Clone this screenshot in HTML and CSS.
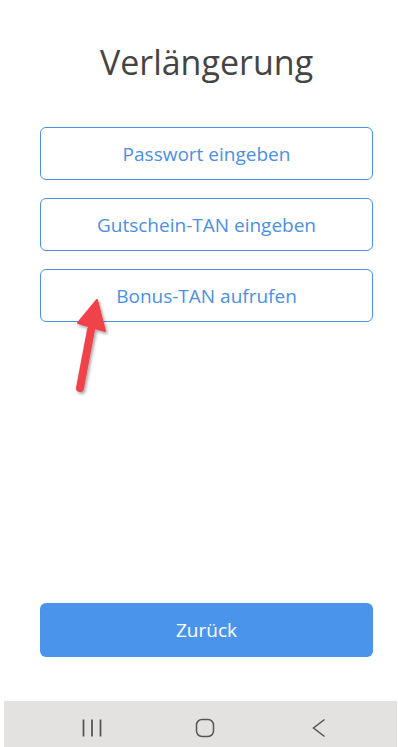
FILE: index.html
```html
<!DOCTYPE html>
<html lang="de">
<head>
<meta charset="utf-8">
<title>Verlängerung</title>
<link rel="stylesheet" href="styles.css">
</head>
<body>
<div class="screen">
  <main class="content">
    <h1 class="title">Verlängerung</h1>
    <div class="options">
      <button class="btn-outline">Passwort eingeben</button>
      <button class="btn-outline">Gutschein-TAN eingeben</button>
      <button class="btn-outline">Bonus-TAN aufrufen</button>
    </div>
    <button class="btn-primary">Zurück</button>
  </main>
  <nav class="navbar">
    <svg class="nav-icon" width="20" height="20" viewBox="0 0 20 20"><path d="M1.5 1.5v17M10 1.5v17M18.5 1.5v17" stroke="#555" stroke-width="1.8" fill="none"/></svg>
    <svg class="nav-icon" width="20" height="20" viewBox="0 0 20 20"><rect x="1.5" y="1.5" width="17" height="17" rx="5.5" stroke="#555" stroke-width="1.5" fill="none"/></svg>
    <svg class="nav-icon" width="20" height="20" viewBox="0 0 20 20"><path d="M15.5 1.5L4.5 10 15.5 18.5" stroke="#555" stroke-width="1.5" fill="none"/></svg>
  </nav>
  <svg class="arrow" width="60" height="110" viewBox="0 0 60 110">
    <defs>
      <filter id="sh" x="-50%" y="-50%" width="200%" height="200%">
        <feDropShadow dx="1.5" dy="2" stdDeviation="1.5" flood-color="#000" flood-opacity="0.35"/>
      </filter>
    </defs>
    <g filter="url(#sh)">
      <path d="M20 96 L31 38" stroke="#f0424a" stroke-width="8" stroke-linecap="round" fill="none"/>
      <path d="M37 8 L18 31 L45 39 Z" fill="#f0424a" stroke="#f0424a" stroke-width="2" stroke-linejoin="round"/>
    </g>
  </svg>
</div>
</body>
</html>
```

FILE: styles.css
```css
* { box-sizing: border-box; }
html, body { margin: 0; padding: 0; background: #fff; }
body { font-family: "Open Sans", "Noto Sans", sans-serif; }
.screen {
  position: relative;
  width: 398px;
  height: 747px;
  display: flex;
  flex-direction: column;
  overflow: hidden;
}
.content {
  flex: 1;
  display: flex;
  flex-direction: column;
  padding: 40px 25px 44px 40px;
}
.title {
  margin: 0;
  text-align: center;
  font-size: 34px;
  line-height: 44px;
  font-weight: 400;
  color: #444;
}
.options {
  margin-top: 43px;
  display: flex;
  flex-direction: column;
  gap: 18px;
}
.btn-outline {
  height: 53px;
  border: 1px solid #4a90e6;
  border-radius: 6px;
  background: #fff;
  color: #4a90e6;
  font-family: inherit;
  font-size: 19px;
  padding: 0;
}
.btn-primary {
  margin-top: auto;
  height: 54px;
  border: none;
  border-radius: 6px;
  background: #4a95eb;
  color: #fff;
  font-family: inherit;
  font-size: 19px;
  padding: 0;
}
.navbar {
  height: 46px;
  margin-left: 4px;
  margin-right: 1px;
  background: #e3e2e0;
  display: flex;
  align-items: center;
  gap: 93.5px;
  padding: 7px 0 0 77.5px;
}
.nav-icon { display: block; }
.arrow {
  position: absolute;
  left: 60px;
  top: 292px;
}
```
